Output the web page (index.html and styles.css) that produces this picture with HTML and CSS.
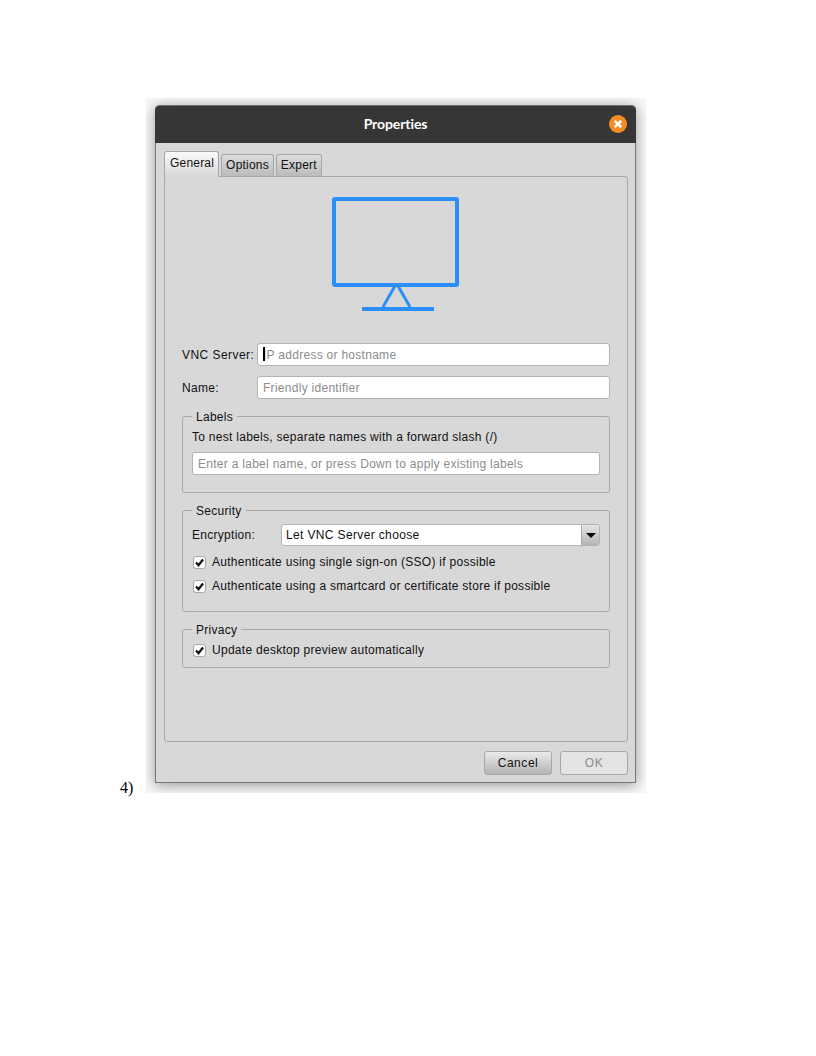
FILE: index.html
```html
<!DOCTYPE html>
<html lang="en">
<head>
    <meta charset="UTF-8">
    <meta name="viewport" content="width=device-width, initial-scale=1.0">
    <title>Properties</title>
    <link rel="stylesheet" href="styles.css">
</head>
<body>
<div class="doc-line">
    <span class="doc-number">4)</span><div class="shot">
        <div class="window">
            <div class="titlebar">
                <span></span>
                <span class="title">Properties</span>
                <span class="close">
                    <svg width="18" height="18" viewBox="0 0 18 18">
                        <circle cx="9" cy="9" r="9" fill="#f28d28"/>
                        <path d="M5.8 5.8l6.4 6.4M12.2 5.8l-6.4 6.4" stroke="#fff" stroke-width="2.4"/>
                    </svg>
                </span>
            </div>
            <div class="content">
                <div class="tabs">
                    <div class="tab active">General</div>
                    <div class="tab">Options</div>
                    <div class="tab">Expert</div>
                </div>
                <div class="pane">
                    <svg class="monitor" width="128" height="114" viewBox="0 0 128 114">
                        <rect x="2" y="2" width="123" height="86" rx="1" fill="none" stroke="#2b8ffb" stroke-width="4"/>
                        <path d="M63.500 88L51 110M65.500 88L78 110" fill="none" stroke="#2b8ffb" stroke-width="3"/>
                        <path d="M30 112H102" fill="none" stroke="#2b8ffb" stroke-width="4"/>
                    </svg>

                    <div class="field first">
                        <label class="field-label">VNC Server:</label>
                        <span class="input-wrap">
                            <input class="text-input" type="text" placeholder="IP address or hostname">
                            <span class="caret"></span>
                        </span>
                    </div>
                    <div class="field">
                        <label class="field-label">Name:</label>
                        <span class="input-wrap">
                            <input class="text-input" type="text" placeholder="Friendly identifier">
                        </span>
                    </div>

                    <fieldset class="group labels">
                        <legend>Labels</legend>
                        <div class="hint">To nest labels, separate names with a forward slash (/)</div>
                        <input class="text-input" type="text" placeholder="Enter a label name, or press Down to apply existing labels">
                    </fieldset>

                    <fieldset class="group security">
                        <legend>Security</legend>
                        <div class="encryption">
                            <span class="encryption-label">Encryption:</span>
                            <div class="select">
                                <span class="select-value">Let VNC Server choose</span>
                                <span class="select-button"><span class="arrow"></span></span>
                            </div>
                        </div>
                        <div class="check-row">
                            <span class="check">
                                <svg width="9" height="9" viewBox="0 0 9 9"><path d="M1 4.500L3.500 7.200L8 1.500" fill="none" stroke="#111" stroke-width="2.200"/></svg>
                            </span>
                            Authenticate using single sign-on (SSO) if possible
                        </div>
                        <div class="check-row">
                            <span class="check">
                                <svg width="9" height="9" viewBox="0 0 9 9"><path d="M1 4.500L3.500 7.200L8 1.500" fill="none" stroke="#111" stroke-width="2.200"/></svg>
                            </span>
                            Authenticate using a smartcard or certificate store if possible
                        </div>
                    </fieldset>

                    <fieldset class="group privacy">
                        <legend>Privacy</legend>
                        <div class="check-row">
                            <span class="check">
                                <svg width="9" height="9" viewBox="0 0 9 9"><path d="M1 4.500L3.500 7.200L8 1.500" fill="none" stroke="#111" stroke-width="2.200"/></svg>
                            </span>
                            Update desktop preview automatically
                        </div>
                    </fieldset>
                </div>
                <div class="footer">
                    <button class="btn" type="button">Cancel</button>
                    <button class="btn disabled" type="button">OK</button>
                </div>
            </div>
        </div>
    </div>
</div>
</body>
</html>
```

FILE: styles.css
```css
body {
    margin: 0;
    background-color: white;
    font-family: "Liberation Serif", serif;
    font-size: 16px;
}

.doc-line {
    padding: 98px 0 0 120px;
}

.doc-number {
    display: inline-block;
    width: 26px;
}

.shot {
    display: inline-block;
    width: 500px;
    height: 695px;
    padding: 7px 10px 10px 9px;
    box-sizing: border-box;
    overflow: hidden;
    background-color: #f7f7f7;
}

.window {
    display: flex;
    flex-direction: column;
    height: 678px;
    box-sizing: border-box;
    border: 1px solid #777;
    border-top: none;
    border-radius: 5px 5px 0 0;
    background-color: #d8d8d8;
    box-shadow: 0 2px 14px rgba(0, 0, 0, 0.4);
    font-family: "Liberation Sans", Arial, sans-serif;
    font-size: 12px;
    letter-spacing: 0.28px;
    color: #111;
}

.titlebar {
    display: grid;
    grid-template-columns: 1fr auto 1fr;
    align-items: center;
    height: 38px;
    box-sizing: border-box;
    flex-shrink: 0;
    margin: 0 -1px;
    padding: 0 9px 2px;
    border-top: 1px solid #707070;
    border-radius: 5px 5px 0 0;
    background-color: #363636;
    color: white;
}

.title {
    font-family: Lato, sans-serif;
    font-size: 14px;
    font-weight: bold;
    letter-spacing: -0.1px;
}

.close {
    justify-self: end;
    height: 18px;
}

.content {
    display: flex;
    flex-direction: column;
    flex: 1;
    padding: 8px 7px 7px 8px;
}

.tabs {
    display: flex;
    align-items: flex-end;
    gap: 2px;
    height: 26px;
    margin-bottom: -1px;
    letter-spacing: 0.2px;
}

.tab {
    height: 23px;
    padding: 0 4px;
    box-sizing: border-box;
    border: 1px solid #a8a8a8;
    border-bottom: none;
    border-radius: 3px 3px 0 0;
    background: linear-gradient(#dcdcdc, #b9b9b9);
    line-height: 20px;
    white-space: nowrap;
}

.tab.active {
    position: relative;
    z-index: 1;
    height: 26px;
    padding-left: 5px;
    background: linear-gradient(#fafafa, #d8d8d8);
    line-height: 23px;
}

.pane {
    display: flex;
    flex-direction: column;
    height: 566px;
    box-sizing: border-box;
    padding: 20px 17px 0;
    border: 1px solid #a8a8a8;
    border-radius: 3px;
}

.monitor {
    align-self: center;
    flex-shrink: 0;
}

.field {
    display: flex;
    align-items: center;
    margin-top: 10px;
}

.field.first {
    margin-top: 32px;
}

.field-label {
    width: 75px;
    flex-shrink: 0;
}

.field.first .field-label {
    letter-spacing: 0.45px;
}

.input-wrap {
    position: relative;
    flex: 1;
}

.text-input {
    display: block;
    width: 100%;
    height: 23px;
    box-sizing: border-box;
    padding: 0 5px;
    border: 1px solid #b4b4b4;
    border-radius: 3px;
    background-color: white;
    font: inherit;
    letter-spacing: inherit;
    outline: none;
}

.text-input::placeholder {
    color: #8c8c8c;
    opacity: 1;
}

.caret {
    position: absolute;
    left: 6px;
    top: 4px;
    width: 2px;
    height: 14px;
    background-color: black;
}

.group {
    margin: 10px 0 0;
    padding: 0 9px;
    border: 1px solid #a8a8a8;
    border-radius: 3px;
    min-width: 0;
}

.group legend {
    margin-left: 0;
    padding: 0 4px;
    line-height: 16px;
    height: 14px;
}

.labels {
    padding-top: 7px;
    padding-bottom: 17px;
}

.hint {
    line-height: 14px;
    margin-bottom: 8px;
}

.security {
    padding-top: 7px;
    padding-bottom: 17px;
}

.encryption {
    display: flex;
    align-items: center;
    height: 22px;
}

.encryption-label {
    width: 89px;
    flex-shrink: 0;
}

.select {
    display: flex;
    flex: 1;
    height: 22px;
    box-sizing: border-box;
    border: 1px solid #b4b4b4;
    border-radius: 3px;
    background-color: white;
    overflow: hidden;
}

.select-value {
    flex: 1;
    padding-left: 4px;
    line-height: 20px;
    letter-spacing: 0.36px;
}

.select-button {
    display: flex;
    align-items: center;
    justify-content: center;
    width: 17px;
    border-left: 1px solid #a8a8a8;
    background: linear-gradient(#e4e4e4, #b4b4b4);
}

.arrow {
    width: 0;
    height: 0;
    border-left: 5px solid transparent;
    border-right: 5px solid transparent;
    border-top: 5px solid black;
}

.check-row {
    display: flex;
    align-items: center;
    gap: 6px;
    height: 16px;
    margin-top: 8px;
    padding-left: 1px;
    white-space: nowrap;
}

.check {
    display: flex;
    align-items: center;
    justify-content: center;
    width: 13px;
    height: 13px;
    box-sizing: border-box;
    border: 1px solid #a8a8a8;
    border-radius: 3px;
    background-color: white;
}

.privacy {
    padding-top: 6px;
    padding-bottom: 9px;
}

.privacy .check-row {
    margin-top: 0;
}

.footer {
    display: flex;
    justify-content: flex-end;
    gap: 8px;
    margin-top: 9px;
}

.btn {
    width: 68px;
    height: 24px;
    padding: 0;
    border: 1px solid #a8a8a8;
    border-radius: 3px;
    background: linear-gradient(#ebebeb, #b4b4b4);
    font: inherit;
    letter-spacing: 0.55px;
    color: #111;
}

.btn.disabled {
    background: #e4e4e4;
    color: #8c8c8c;
}
```
